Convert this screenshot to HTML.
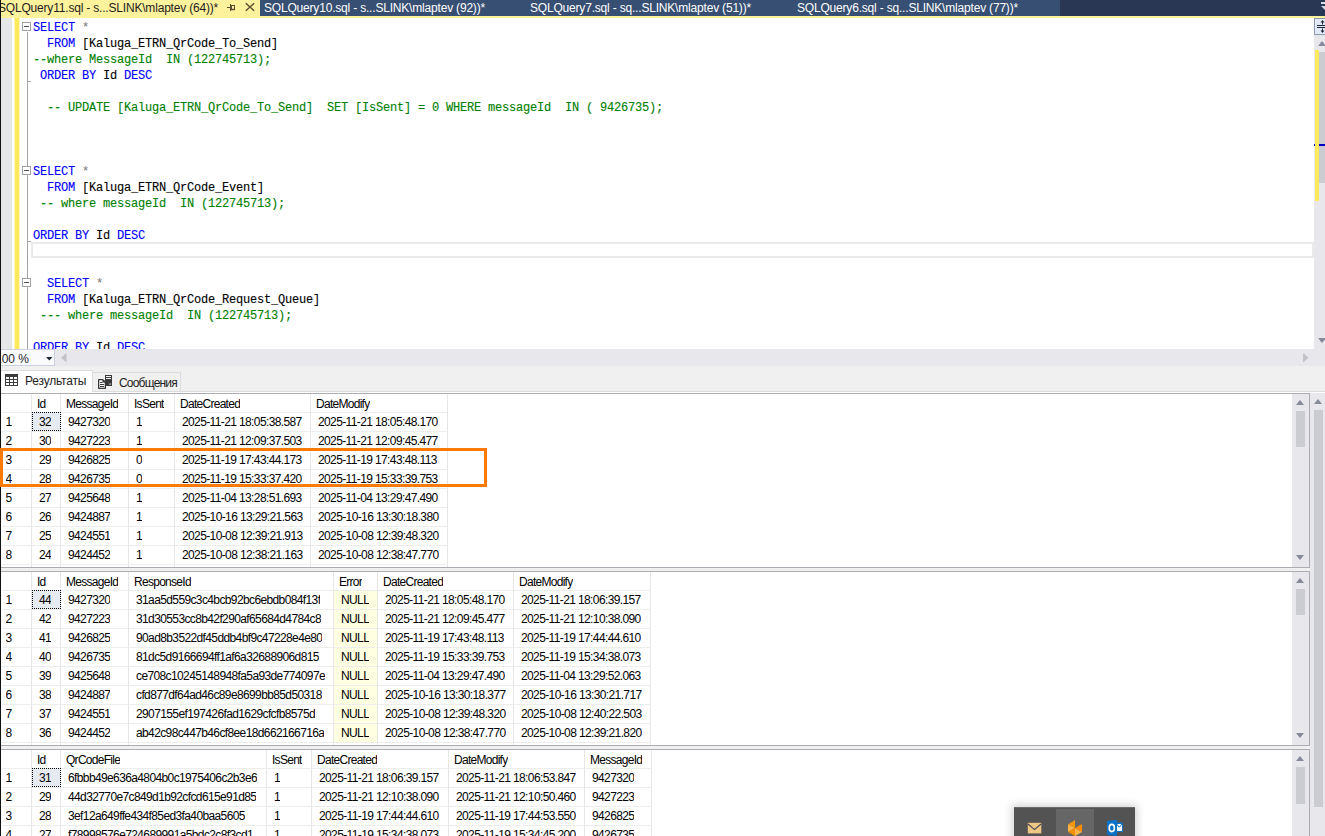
<!DOCTYPE html><html><head><meta charset="utf-8"><style>
*{margin:0;padding:0;box-sizing:border-box}
html,body{width:1325px;height:836px;overflow:hidden;background:#F0F0F0;position:relative}
body{font-family:"Liberation Sans",sans-serif;font-size:12px;color:#000}
.abs{position:absolute}
.tabbar{left:0;top:0;width:1325px;height:16px;background:#293754}
.tabgroup{left:260px;top:0;width:800px;height:16px;background:#364F73}
.ytab{left:0;top:0;width:260px;height:16px;background:#FFF29D}
.yline{left:0;top:16px;width:1325px;height:2px;background:#FFF29D}
.tt{position:absolute;top:0;height:16px;line-height:16px;font-size:12px;white-space:pre;letter-spacing:-0.19px}
.tw{color:#fff}
.editor{left:0;top:18px;width:1314px;height:331px;background:#fff;overflow:hidden}
.gutter{left:1px;top:0;width:11px;height:331px;background:#E6E7E8}
.chg{left:14px;top:0;width:6px;height:331px;background:linear-gradient(to right,rgba(255,234,94,0.45) 0,rgba(255,234,94,0.45) 1px,#FFEA5E 1px,#FFEA5E 5px,rgba(255,234,94,0.45) 5px)}
.fold{left:27px;width:1px;background:#A5A5A5}
.fbox{width:9px;height:9px;border:1px solid #A0A0A0;background:#fff}
.fbox:after{content:"";position:absolute;left:1px;top:3px;width:5px;height:1px;background:#505050}
.tick{left:27px;width:4px;height:1px;background:#A5A5A5}
.code{position:absolute;left:33px;font-family:"Liberation Mono",monospace;font-size:12px;letter-spacing:-0.2px;white-space:pre;height:16px;line-height:16px;-webkit-text-stroke:0.1px}
.k{color:#0000FF}.c{color:#008000}.g{color:#808080}
.curline{left:31px;top:224px;width:1283px;height:16px;border:2px solid #EAEAEA}
.vsb{left:1314px;top:18px;width:11px;height:331px;background:#E8E8EC}
.hsb{left:55px;top:349px;width:1270px;height:17px;background:#E8E8EC}
.zoom{left:0;top:349px;width:55px;height:17px;background:#FAFAFC;border:1px solid #C9D1E0;border-left:none}
.grid{left:1px;width:1309px;height:175px;background:#fff;border-top:1px solid #ABADB3;border-bottom:1px solid #ABADB3;border-right:1px solid #ABADB3;overflow:hidden}
.gsb{right:0;top:0;width:17px;height:174px;background:#E8E8EC}
.row{position:absolute;left:0;height:19px;width:1291px}
.cell{position:absolute;top:0;height:19px;line-height:18px;white-space:pre;letter-spacing:-0.62px;overflow:hidden}
.hc{letter-spacing:-0.72px}
.vl{position:absolute;top:0;width:1px;background:#E6E6E6}
.hl{position:absolute;left:1px;height:1px;background:#EDEDED}
.tri-up{position:absolute;width:0;height:0;border-left:4.5px solid transparent;border-right:4.5px solid transparent;border-bottom:5px solid #868999}
.tri-dn{position:absolute;width:0;height:0;border-left:4.5px solid transparent;border-right:4.5px solid transparent;border-top:5px solid #868999}
.thumb{position:absolute;background:#CBCCD2}
</style></head><body>
<div class="abs tabbar"></div><div class="abs tabgroup"></div><div class="abs ytab"></div><div class="abs yline"></div>
<div class="tt" style="left:-2px;color:#1E1E1E">SQLQuery11.sql - s...SLINK\mlaptev (64))*</div>
<svg class="abs" style="left:224px;top:0" width="36" height="16" viewBox="0 0 36 16"><g fill="none" stroke="#5C4E32" stroke-width="1"><path d="M3 7.5H6.5"/><path d="M6.5 4V11"/><rect x="7.5" y="5.5" width="3" height="4"/><path d="M7 9.5H11" stroke-width="1.5"/></g><path d="M21.8 3.3L30.2 10.7M30.2 3.3L21.8 10.7" stroke="#5C4E32" stroke-width="1.5" fill="none"/></svg>
<svg class="abs" style="left:1319px;top:0" width="6" height="12"><rect x="2" y="2" width="6" height="2" fill="#D8DCE6"/><path d="M2 6H8L6 10Z" fill="#D8DCE6"/></svg>
<div class="tt tw" style="left:264px">SQLQuery10.sql - s...SLINK\mlaptev (92))*</div>
<div class="tt tw" style="left:530px">SQLQuery7.sql - sq...SLINK\mlaptev (51))*</div>
<div class="tt tw" style="left:797px">SQLQuery6.sql - sq...SLINK\mlaptev (77))*</div>
<div class="abs editor">
<div class="abs gutter"></div><div class="abs chg"></div>
<div class="abs fold" style="top:14px;height:320px"></div>
<div class="abs fbox" style="left:22px;top:4px"></div>
<div class="abs fbox" style="left:22px;top:148px"></div>
<div class="abs fbox" style="left:22px;top:260px"></div>
<div class="abs tick" style="top:63px"></div>
<div class="abs tick" style="top:223px"></div>
<div class="abs curline"></div>
<div class="code" style="top:1.5px"><span class="k">SELECT</span> <span class="g">*</span></div>
<div class="code" style="top:17.5px">  <span class="k">FROM</span> [Kaluga_ETRN_QrCode_To_Send]</div>
<div class="code" style="top:33.5px"><span class="c">--where MessageId  IN (122745713);</span></div>
<div class="code" style="top:49.5px"> <span class="k">ORDER BY</span> Id <span class="k">DESC</span></div>
<div class="code" style="top:81.5px">  <span class="c">-- UPDATE [Kaluga_ETRN_QrCode_To_Send]  SET [IsSent] = 0 WHERE messageId  IN ( 9426735);</span></div>
<div class="code" style="top:145.5px"><span class="k">SELECT</span> <span class="g">*</span></div>
<div class="code" style="top:161.5px">  <span class="k">FROM</span> [Kaluga_ETRN_QrCode_Event]</div>
<div class="code" style="top:177.5px"> <span class="c">-- where messageId  IN (122745713);</span></div>
<div class="code" style="top:209.5px"><span class="k">ORDER BY</span> Id <span class="k">DESC</span></div>
<div class="code" style="top:257.5px">  <span class="k">SELECT</span> <span class="g">*</span></div>
<div class="code" style="top:273.5px">  <span class="k">FROM</span> [Kaluga_ETRN_QrCode_Request_Queue]</div>
<div class="code" style="top:289.5px"> <span class="c">--- where messageId  IN (122745713);</span></div>
<div class="code" style="top:321.5px"><span class="k">ORDER BY</span> Id <span class="k">DESC</span></div>
</div>
<div class="abs vsb">
<div class="abs" style="left:0;top:0;width:12px;height:17px;background:#E3EAF7;border:1px solid #8D9AB0;border-right:none"></div>
<svg class="abs" style="left:0;top:0" width="11" height="17"><path d="M3 7.5H11M3 9.5H11" stroke="#1E2536" stroke-width="1"/><path d="M8.5 3V6.5M8.5 10.5V14" stroke="#1E2536" stroke-width="1"/><path d="M6.5 4.5L8.5 2L10.5 4.5Z M6.5 12.5L8.5 15L10.5 12.5Z" fill="#1E2536"/></svg>
<div class="tri-up" style="left:4px;top:23px"></div>
<div class="abs" style="left:1px;top:32px;width:4px;height:151px;background:#FFEA5E"></div>
<div class="thumb" style="left:5px;top:34px;width:6px;height:131px"></div>
<div class="abs" style="left:1px;top:165px;width:4px;height:18px;background:#FFEA5E"></div>
<div class="abs" style="left:0;top:126px;width:1px;height:2px;background:#0000C8"></div>
<div class="abs" style="left:5px;top:126px;width:6px;height:2px;background:#0000C8"></div>
<div class="tri-dn" style="left:4px;top:320px"></div>
</div>
<div class="abs hsb"></div>
<svg class="abs" style="left:61px;top:353px" width="6" height="10"><path d="M5.5 0V9.5L0 4.75Z" fill="#C2C3C9"/></svg>
<svg class="abs" style="left:1303px;top:353px" width="6" height="10"><path d="M0 0V9.5L5.5 4.75Z" fill="#C2C3C9"/></svg>
<div class="abs zoom"><div class="tt" style="left:-5px;top:2px;line-height:15px;color:#1E1E1E;letter-spacing:0px">100 %</div>
<svg class="abs" style="left:46px;top:7px" width="7" height="4"><path d="M0 0H6.5L3.25 3.5Z" fill="#1E2536"/></svg></div>
<div class="abs" style="left:1px;top:370px;width:92px;height:23px;background:#fff;border-top:1px solid #DCDCDC;border-right:1px solid #DCDCDC"></div>
<svg class="abs" style="left:5px;top:374px" width="13" height="12" shape-rendering="crispEdges"><rect x="0" y="0" width="13" height="12" fill="#3C3C3C"/><g fill="#fff"><rect x="1" y="3" width="3" height="2"/><rect x="5" y="3" width="3" height="2"/><rect x="9" y="3" width="3" height="2"/><rect x="1" y="6" width="3" height="2"/><rect x="5" y="6" width="3" height="2"/><rect x="9" y="6" width="3" height="2"/><rect x="1" y="9" width="3" height="2"/><rect x="5" y="9" width="3" height="2"/><rect x="9" y="9" width="3" height="2"/></g></svg>
<div class="tt" style="left:25px;top:373px;color:#1E1E1E;letter-spacing:-0.2px">Результаты</div>
<div class="abs" style="left:93px;top:372px;width:88px;height:19px;background:#F0F0F0;border:1px solid #DCDCDC;border-left:none;border-bottom:none"></div>
<svg class="abs" style="left:97px;top:374px" width="16" height="16"><path d="M1.65 5.65H5.8L8.35 8.2V14.35H1.65Z" fill="#fff" stroke="#3A3A3A" stroke-width="1.3" stroke-linejoin="round"/><path d="M5.5 5.5L8.5 8.5H5.5Z" fill="#3A3A3A"/><path d="M3 8.5H5.5M3 10.5H7M3 12.5H7" stroke="#3A3A3A" stroke-width="1"/><rect x="8" y="1" width="7" height="11" fill="#3A3A3A"/><rect x="9" y="2" width="5" height="1" fill="#fff"/><rect x="9" y="4" width="5" height="1" fill="#fff"/><rect x="12.5" y="9.5" width="1.2" height="1.2" fill="#fff"/></svg>
<div class="tt" style="left:119px;top:375px;color:#1E1E1E;letter-spacing:-0.8px">Сообщения</div>
<div class="abs" style="left:93px;top:391px;width:1232px;height:1px;background:#DCDCDC"></div>
<div class="abs" style="left:1px;top:392px;width:1324px;height:1px;background:#FFFFFF"></div>
<div class="abs" style="left:1310px;top:393px;width:15px;height:443px;background:#E8E8EC"></div>
<div class="tri-up" style="left:1314px;top:399px"></div>
<div class="thumb" style="left:1314px;top:410px;width:9px;height:397px"></div>
<div class="abs grid" style="top:393px">
<div class="vl" style="left:30px;height:174px"></div>
<div class="vl" style="left:30px;height:174px"></div>
<div class="vl" style="left:59px;height:174px"></div>
<div class="vl" style="left:127px;height:174px"></div>
<div class="vl" style="left:173px;height:174px"></div>
<div class="vl" style="left:309px;height:174px"></div>
<div class="vl" style="left:446px;height:174px"></div>
<div class="hl" style="top:18px;width:446px"></div>
<div class="cell hc" style="top:1px;left:36px">Id</div>
<div class="cell hc" style="top:1px;left:65px">MessageId</div>
<div class="cell hc" style="top:1px;left:133px">IsSent</div>
<div class="cell hc" style="top:1px;left:179px">DateCreated</div>
<div class="cell hc" style="top:1px;left:315px">DateModify</div>
<div class="hl" style="top:37px;width:446px"></div>
<div class="cell" style="top:19px;left:4.5px">1</div>
<div class="abs" style="left:31px;top:18px;width:29px;height:19px;background:#E6EBF1;border:1px dotted #000"></div>
<div class="cell" style="top:19px;left:38px">32</div>
<div class="cell" style="top:19px;left:67px">9427320</div>
<div class="cell" style="top:19px;left:135px">1</div>
<div class="cell" style="top:19px;left:181px">2025-11-21 18:05:38.587</div>
<div class="cell" style="top:19px;left:317px">2025-11-21 18:05:48.170</div>
<div class="hl" style="top:56px;width:446px"></div>
<div class="cell" style="top:38px;left:4.5px">2</div>
<div class="cell" style="top:38px;left:38px">30</div>
<div class="cell" style="top:38px;left:67px">9427223</div>
<div class="cell" style="top:38px;left:135px">1</div>
<div class="cell" style="top:38px;left:181px">2025-11-21 12:09:37.503</div>
<div class="cell" style="top:38px;left:317px">2025-11-21 12:09:45.477</div>
<div class="hl" style="top:75px;width:446px"></div>
<div class="cell" style="top:57px;left:4.5px">3</div>
<div class="cell" style="top:57px;left:38px">29</div>
<div class="cell" style="top:57px;left:67px">9426825</div>
<div class="cell" style="top:57px;left:135px">0</div>
<div class="cell" style="top:57px;left:181px">2025-11-19 17:43:44.173</div>
<div class="cell" style="top:57px;left:317px">2025-11-19 17:43:48.113</div>
<div class="hl" style="top:94px;width:446px"></div>
<div class="cell" style="top:76px;left:4.5px">4</div>
<div class="cell" style="top:76px;left:38px">28</div>
<div class="cell" style="top:76px;left:67px">9426735</div>
<div class="cell" style="top:76px;left:135px">0</div>
<div class="cell" style="top:76px;left:181px">2025-11-19 15:33:37.420</div>
<div class="cell" style="top:76px;left:317px">2025-11-19 15:33:39.753</div>
<div class="hl" style="top:113px;width:446px"></div>
<div class="cell" style="top:95px;left:4.5px">5</div>
<div class="cell" style="top:95px;left:38px">27</div>
<div class="cell" style="top:95px;left:67px">9425648</div>
<div class="cell" style="top:95px;left:135px">1</div>
<div class="cell" style="top:95px;left:181px">2025-11-04 13:28:51.693</div>
<div class="cell" style="top:95px;left:317px">2025-11-04 13:29:47.490</div>
<div class="hl" style="top:132px;width:446px"></div>
<div class="cell" style="top:114px;left:4.5px">6</div>
<div class="cell" style="top:114px;left:38px">26</div>
<div class="cell" style="top:114px;left:67px">9424887</div>
<div class="cell" style="top:114px;left:135px">1</div>
<div class="cell" style="top:114px;left:181px">2025-10-16 13:29:21.563</div>
<div class="cell" style="top:114px;left:317px">2025-10-16 13:30:18.380</div>
<div class="hl" style="top:151px;width:446px"></div>
<div class="cell" style="top:133px;left:4.5px">7</div>
<div class="cell" style="top:133px;left:38px">25</div>
<div class="cell" style="top:133px;left:67px">9424551</div>
<div class="cell" style="top:133px;left:135px">1</div>
<div class="cell" style="top:133px;left:181px">2025-10-08 12:39:21.913</div>
<div class="cell" style="top:133px;left:317px">2025-10-08 12:39:48.320</div>
<div class="hl" style="top:170px;width:446px"></div>
<div class="cell" style="top:152px;left:4.5px">8</div>
<div class="cell" style="top:152px;left:38px">24</div>
<div class="cell" style="top:152px;left:67px">9424452</div>
<div class="cell" style="top:152px;left:135px">1</div>
<div class="cell" style="top:152px;left:181px">2025-10-08 12:38:21.163</div>
<div class="cell" style="top:152px;left:317px">2025-10-08 12:38:47.770</div>
<div class="hl" style="top:189px;width:446px"></div>
<div class="cell" style="top:171px;left:38px"></div>
<div class="cell" style="top:171px;left:67px"></div>
<div class="cell" style="top:171px;left:135px"></div>
<div class="cell" style="top:171px;left:181px"></div>
<div class="cell" style="top:171px;left:317px"></div>
<div class="abs gsb">
<div class="tri-up" style="left:3.5px;top:6px"></div>
<div class="thumb" style="left:3.5px;top:17px;width:9px;height:36px"></div>
<div class="tri-dn" style="left:3.5px;top:161px"></div>
</div>
</div>
<div class="abs grid" style="top:571px">
<div class="vl" style="left:30px;height:174px"></div>
<div class="vl" style="left:30px;height:174px"></div>
<div class="vl" style="left:59px;height:174px"></div>
<div class="vl" style="left:127px;height:174px"></div>
<div class="vl" style="left:332px;height:174px"></div>
<div class="vl" style="left:376px;height:174px"></div>
<div class="vl" style="left:512px;height:174px"></div>
<div class="vl" style="left:649px;height:174px"></div>
<div class="hl" style="top:18px;width:649px"></div>
<div class="cell hc" style="top:1px;left:36px">Id</div>
<div class="cell hc" style="top:1px;left:65px">MessageId</div>
<div class="cell hc" style="top:1px;left:133px">ResponseId</div>
<div class="cell hc" style="top:1px;left:338px">Error</div>
<div class="cell hc" style="top:1px;left:382px">DateCreated</div>
<div class="cell hc" style="top:1px;left:518px">DateModify</div>
<div class="hl" style="top:37px;width:649px"></div>
<div class="cell" style="top:19px;left:4.5px">1</div>
<div class="abs" style="left:31px;top:18px;width:29px;height:19px;background:#E6EBF1;border:1px dotted #000"></div>
<div class="cell" style="top:19px;left:38px">44</div>
<div class="cell" style="top:19px;left:67px">9427320</div>
<div class="cell" style="top:19px;left:135px">31aa5d559c3c4bcb92bc6ebdb084f13f</div>
<div class="abs" style="left:333px;top:19px;width:43px;height:18px;background:#FFFFE1"></div>
<div class="cell" style="top:19px;left:340px">NULL</div>
<div class="cell" style="top:19px;left:384px">2025-11-21 18:05:48.170</div>
<div class="cell" style="top:19px;left:520px">2025-11-21 18:06:39.157</div>
<div class="hl" style="top:56px;width:649px"></div>
<div class="cell" style="top:38px;left:4.5px">2</div>
<div class="cell" style="top:38px;left:38px">42</div>
<div class="cell" style="top:38px;left:67px">9427223</div>
<div class="cell" style="top:38px;left:135px">31d30553cc8b42f290af65684d4784c8</div>
<div class="abs" style="left:333px;top:38px;width:43px;height:18px;background:#FFFFE1"></div>
<div class="cell" style="top:38px;left:340px">NULL</div>
<div class="cell" style="top:38px;left:384px">2025-11-21 12:09:45.477</div>
<div class="cell" style="top:38px;left:520px">2025-11-21 12:10:38.090</div>
<div class="hl" style="top:75px;width:649px"></div>
<div class="cell" style="top:57px;left:4.5px">3</div>
<div class="cell" style="top:57px;left:38px">41</div>
<div class="cell" style="top:57px;left:67px">9426825</div>
<div class="cell" style="top:57px;left:135px">90ad8b3522df45ddb4bf9c47228e4e80</div>
<div class="abs" style="left:333px;top:57px;width:43px;height:18px;background:#FFFFE1"></div>
<div class="cell" style="top:57px;left:340px">NULL</div>
<div class="cell" style="top:57px;left:384px">2025-11-19 17:43:48.113</div>
<div class="cell" style="top:57px;left:520px">2025-11-19 17:44:44.610</div>
<div class="hl" style="top:94px;width:649px"></div>
<div class="cell" style="top:76px;left:4.5px">4</div>
<div class="cell" style="top:76px;left:38px">40</div>
<div class="cell" style="top:76px;left:67px">9426735</div>
<div class="cell" style="top:76px;left:135px">81dc5d9166694ff1af6a32688906d815</div>
<div class="abs" style="left:333px;top:76px;width:43px;height:18px;background:#FFFFE1"></div>
<div class="cell" style="top:76px;left:340px">NULL</div>
<div class="cell" style="top:76px;left:384px">2025-11-19 15:33:39.753</div>
<div class="cell" style="top:76px;left:520px">2025-11-19 15:34:38.073</div>
<div class="hl" style="top:113px;width:649px"></div>
<div class="cell" style="top:95px;left:4.5px">5</div>
<div class="cell" style="top:95px;left:38px">39</div>
<div class="cell" style="top:95px;left:67px">9425648</div>
<div class="cell" style="top:95px;left:135px">ce708c10245148948fa5a93de774097e</div>
<div class="abs" style="left:333px;top:95px;width:43px;height:18px;background:#FFFFE1"></div>
<div class="cell" style="top:95px;left:340px">NULL</div>
<div class="cell" style="top:95px;left:384px">2025-11-04 13:29:47.490</div>
<div class="cell" style="top:95px;left:520px">2025-11-04 13:29:52.063</div>
<div class="hl" style="top:132px;width:649px"></div>
<div class="cell" style="top:114px;left:4.5px">6</div>
<div class="cell" style="top:114px;left:38px">38</div>
<div class="cell" style="top:114px;left:67px">9424887</div>
<div class="cell" style="top:114px;left:135px">cfd877df64ad46c89e8699bb85d50318</div>
<div class="abs" style="left:333px;top:114px;width:43px;height:18px;background:#FFFFE1"></div>
<div class="cell" style="top:114px;left:340px">NULL</div>
<div class="cell" style="top:114px;left:384px">2025-10-16 13:30:18.377</div>
<div class="cell" style="top:114px;left:520px">2025-10-16 13:30:21.717</div>
<div class="hl" style="top:151px;width:649px"></div>
<div class="cell" style="top:133px;left:4.5px">7</div>
<div class="cell" style="top:133px;left:38px">37</div>
<div class="cell" style="top:133px;left:67px">9424551</div>
<div class="cell" style="top:133px;left:135px">2907155ef197426fad1629cfcfb8575d</div>
<div class="abs" style="left:333px;top:133px;width:43px;height:18px;background:#FFFFE1"></div>
<div class="cell" style="top:133px;left:340px">NULL</div>
<div class="cell" style="top:133px;left:384px">2025-10-08 12:39:48.320</div>
<div class="cell" style="top:133px;left:520px">2025-10-08 12:40:22.503</div>
<div class="hl" style="top:170px;width:649px"></div>
<div class="cell" style="top:152px;left:4.5px">8</div>
<div class="cell" style="top:152px;left:38px">36</div>
<div class="cell" style="top:152px;left:67px">9424452</div>
<div class="cell" style="top:152px;left:135px">ab42c98c447b46cf8ee18d662166716a</div>
<div class="abs" style="left:333px;top:152px;width:43px;height:18px;background:#FFFFE1"></div>
<div class="cell" style="top:152px;left:340px">NULL</div>
<div class="cell" style="top:152px;left:384px">2025-10-08 12:38:47.770</div>
<div class="cell" style="top:152px;left:520px">2025-10-08 12:39:21.820</div>
<div class="hl" style="top:189px;width:649px"></div>
<div class="cell" style="top:171px;left:38px"></div>
<div class="cell" style="top:171px;left:67px"></div>
<div class="cell" style="top:171px;left:135px"></div>
<div class="cell" style="top:171px;left:340px"></div>
<div class="cell" style="top:171px;left:384px"></div>
<div class="cell" style="top:171px;left:520px"></div>
<div class="abs gsb">
<div class="tri-up" style="left:3.5px;top:6px"></div>
<div class="thumb" style="left:3.5px;top:17px;width:9px;height:26px"></div>
<div class="tri-dn" style="left:3.5px;top:161px"></div>
</div>
</div>
<div class="abs grid" style="top:749px">
<div class="vl" style="left:30px;height:174px"></div>
<div class="vl" style="left:30px;height:174px"></div>
<div class="vl" style="left:59px;height:174px"></div>
<div class="vl" style="left:265px;height:174px"></div>
<div class="vl" style="left:310px;height:174px"></div>
<div class="vl" style="left:447px;height:174px"></div>
<div class="vl" style="left:583px;height:174px"></div>
<div class="vl" style="left:650px;height:174px"></div>
<div class="hl" style="top:18px;width:650px"></div>
<div class="cell hc" style="top:1px;left:36px">Id</div>
<div class="cell hc" style="top:1px;left:65px">QrCodeFile</div>
<div class="cell hc" style="top:1px;left:271px">IsSent</div>
<div class="cell hc" style="top:1px;left:316px">DateCreated</div>
<div class="cell hc" style="top:1px;left:453px">DateModify</div>
<div class="cell hc" style="top:1px;left:589px">MessageId</div>
<div class="hl" style="top:37px;width:650px"></div>
<div class="cell" style="top:19px;left:4.5px">1</div>
<div class="abs" style="left:31px;top:18px;width:29px;height:19px;background:#E6EBF1;border:1px dotted #000"></div>
<div class="cell" style="top:19px;left:38px">31</div>
<div class="cell" style="top:19px;left:67px">6fbbb49e636a4804b0c1975406c2b3e6</div>
<div class="cell" style="top:19px;left:273px">1</div>
<div class="cell" style="top:19px;left:318px">2025-11-21 18:06:39.157</div>
<div class="cell" style="top:19px;left:455px">2025-11-21 18:06:53.847</div>
<div class="cell" style="top:19px;left:591px">9427320</div>
<div class="hl" style="top:56px;width:650px"></div>
<div class="cell" style="top:38px;left:4.5px">2</div>
<div class="cell" style="top:38px;left:38px">29</div>
<div class="cell" style="top:38px;left:67px">44d32770e7c849d1b92cfcd615e91d85</div>
<div class="cell" style="top:38px;left:273px">1</div>
<div class="cell" style="top:38px;left:318px">2025-11-21 12:10:38.090</div>
<div class="cell" style="top:38px;left:455px">2025-11-21 12:10:50.460</div>
<div class="cell" style="top:38px;left:591px">9427223</div>
<div class="hl" style="top:75px;width:650px"></div>
<div class="cell" style="top:57px;left:4.5px">3</div>
<div class="cell" style="top:57px;left:38px">28</div>
<div class="cell" style="top:57px;left:67px">3ef12a649ffe434f85ed3fa40baa5605</div>
<div class="cell" style="top:57px;left:273px">1</div>
<div class="cell" style="top:57px;left:318px">2025-11-19 17:44:44.610</div>
<div class="cell" style="top:57px;left:455px">2025-11-19 17:44:53.550</div>
<div class="cell" style="top:57px;left:591px">9426825</div>
<div class="hl" style="top:94px;width:650px"></div>
<div class="cell" style="top:76px;left:4.5px">4</div>
<div class="cell" style="top:76px;left:38px">27</div>
<div class="cell" style="top:76px;left:67px">f78998576e724689991a5bdc2c8f3cd1</div>
<div class="cell" style="top:76px;left:273px">1</div>
<div class="cell" style="top:76px;left:318px">2025-11-19 15:34:38.073</div>
<div class="cell" style="top:76px;left:455px">2025-11-19 15:34:45.200</div>
<div class="cell" style="top:76px;left:591px">9426735</div>
<div class="abs gsb">
<div class="tri-up" style="left:3.5px;top:6px"></div>
<div class="thumb" style="left:3.5px;top:17px;width:9px;height:37px"></div>
<div class="tri-dn" style="left:3.5px;top:161px"></div>
</div>
</div>
<div class="abs" style="left:0;top:0;width:1px;height:836px;background:#111"></div>
<div class="abs" style="left:0;top:448px;width:487px;height:39px;border:3.5px solid #FF7A00"></div>
<div class="abs" style="left:1014px;top:807px;width:121px;height:40px;background:#535353;border-top:1px solid #6B6B6B;box-shadow:0 0 8px 2px rgba(0,0,0,0.18)"></div>
<div class="abs" style="left:1056px;top:809px;width:38px;height:30px;background:#666666"></div>
<svg class="abs" style="left:1027px;top:822px" width="15" height="12"><rect x="0.8" y="0.8" width="13.5" height="10.6" fill="#EEC784"/><path d="M1 2L7.5 7.6L14 2" fill="none" stroke="#41454E" stroke-width="1.1"/></svg>
<svg class="abs" style="left:1067px;top:819px" width="17" height="17"><path d="M1 5.5L8 1V9Z" fill="#F59A0A"/><path d="M1 5.5L8 9L1 13Z" fill="#FAB347"/><path d="M1 13L8 9V17Z" fill="#F39200"/><path d="M8 9L15 5V13Z" fill="#FF8A00"/><path d="M8 9L15 13L8 17Z" fill="#FAB347"/></svg>
<svg class="abs" style="left:1106px;top:819px" width="18" height="17"><path d="M9.5 3.5H17V13H9.5Z" fill="#0A72C8"/><path d="M10.5 5H16V12H10.5Z" fill="#fff"/><path d="M10.5 5L13.2 8.2L16 5" fill="none" stroke="#0A72C8" stroke-width="1"/><path d="M1 2L11 0.8V17L1 15.5Z" fill="#0A72C8"/><ellipse cx="5.8" cy="9" rx="2.6" ry="3.6" fill="none" stroke="#fff" stroke-width="1.6"/></svg>
</body></html>
